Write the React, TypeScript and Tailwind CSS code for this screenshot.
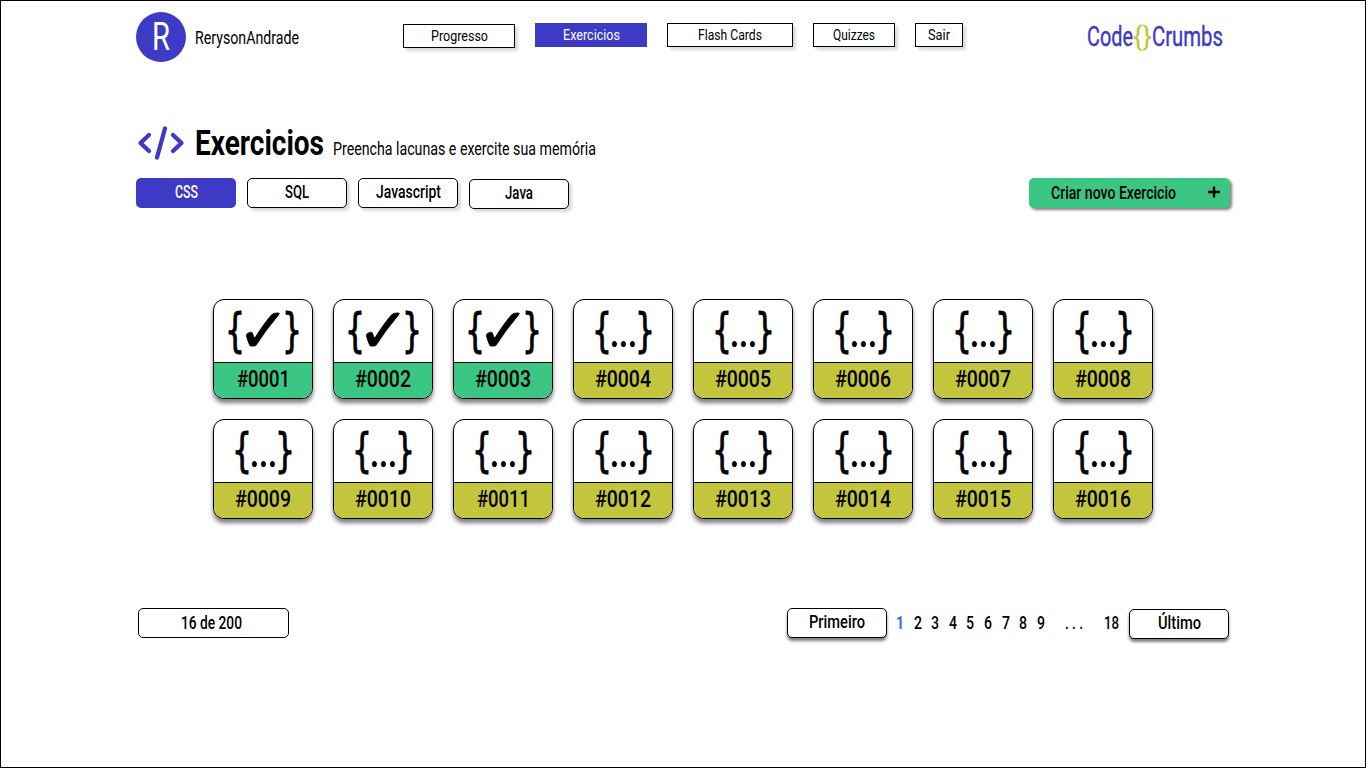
import { useLayoutEffect, useRef, useState } from 'react';
import type { ReactNode } from 'react';

/** Condenses its text horizontally so that it fills the width given by its classes. */
function Fit({ className, children }: { className: string; children: ReactNode }) {
  const outer = useRef<HTMLSpanElement>(null);
  const inner = useRef<HTMLSpanElement>(null);
  const [scale, setScale] = useState(1);
  useLayoutEffect(() => {
    if (outer.current && inner.current) {
      setScale(outer.current.clientWidth / inner.current.getBoundingClientRect().width);
    }
  }, []);
  return (
    <span ref={outer} className={`flex shrink-0 justify-start ${className}`}>
      <span
        ref={inner}
        className="block shrink-0 origin-left whitespace-nowrap"
        style={{ transform: `scaleX(${scale})` }}
      >
        {children}
      </span>
    </span>
  );
}

const navItems = [
  { label: 'Progresso', box: 'w-28 mt-px', text: 'w-[57px]', active: false },
  { label: 'Exercicios', box: 'w-28', text: 'w-[57px]', active: true },
  { label: 'Flash Cards', box: 'w-[126px]', text: 'w-16', active: false },
  { label: 'Quizzes', box: 'w-[82px]', text: 'w-[42px]', active: false },
  { label: 'Sair', box: 'w-12', text: 'w-[22px]', active: false },
];

const tabs = [
  { label: 'CSS', box: '', text: 'w-[23px]', active: true },
  { label: 'SQL', box: '', text: 'w-[24px]', active: false },
  { label: 'Javascript', box: '', text: 'w-[65px]', active: false },
  { label: 'Java', box: 'mt-px', text: 'w-[28px]', active: false },
];

function Card({ index }: { index: number }) {
  const done = index <= 3;
  return (
    <div className="flex size-[100px] flex-col overflow-hidden rounded-[11px] border border-black bg-white shadow-[0_4px_4px_rgba(0,0,0,0.5)]">
      <div className="flex h-[62px] items-center justify-center text-[47px] leading-none">
        <Fit className="w-[20px] pb-[3px] font-['DejaVu_Sans'] [-webkit-text-stroke:1px_#000]">{'{'}</Fit>
        {done ? (
          <Fit className="-mx-[8px] w-[53px] font-['DejaVu_Sans'] text-[62px] [-webkit-text-stroke:0.8px_#000]">✓</Fit>
        ) : (
          <Fit className="-mx-[2px] w-[27px] pt-[5px] text-[40px] font-bold">...</Fit>
        )}
        <Fit className="w-[20px] pb-[3px] font-['DejaVu_Sans'] [-webkit-text-stroke:1px_#000]">{'}'}</Fit>
      </div>
      <div
        className={`flex flex-1 items-center justify-center border-t border-black pb-0.5 text-[23.5px] leading-none font-medium ${
          done ? 'bg-[#3cc684]' : 'bg-[#c3c63c]'
        }`}
      >
        <Fit className={index === 1 || index === 11 ? 'w-[53px]' : 'w-[56px]'}>
          #{String(index).padStart(4, '0')}
        </Fit>
      </div>
    </div>
  );
}

export default function App() {
  return (
    <div className="flex h-[768px] w-[1366px] flex-col overflow-hidden border border-black bg-white font-['Roboto',sans-serif] text-black">
      <header className="flex h-[61px] items-start pt-[11px] pl-[135px]">
        <div className="flex size-[50px] items-center justify-center rounded-full bg-[#3d3ac6] text-[38px] leading-none text-white">
          <Fit className="w-[18px]">R</Fit>
        </div>
        <div className="flex h-[54px] w-[217px] items-center pl-[9px] text-[17.5px] leading-none">
          <Fit className="w-[104px]">RerysonAndrade</Fit>
        </div>
        <nav className="flex w-[560px] gap-5 pt-[11px]">
          {navItems.map((n) => (
            <a
              key={n.label}
              className={`flex h-6 items-center justify-center pt-px text-[15.5px] leading-none ${n.box} ${
                n.active
                  ? 'bg-[#3d3ac6] text-white'
                  : 'border border-black bg-white shadow-[3px_3px_3px_rgba(0,0,0,0.15)]'
              }`}
            >
              <Fit className={n.text}>{n.label}</Fit>
            </a>
          ))}
        </nav>
        <div className="flex pt-[11px] pl-[124px] text-[28px] leading-none text-[#3d3ac6]">
          <Fit className="w-[46px] [-webkit-text-stroke:0.4px_#3d3ac6]">Code</Fit>
          <Fit className="w-[19px] text-[#c3c63c]">{'{}'}</Fit>
          <Fit className="w-[71px] [-webkit-text-stroke:0.4px_#3d3ac6]">Crumbs</Fit>
        </div>
      </header>

      <section className="mt-[63px] flex h-[36px] items-start pl-[136px]">
        <svg className="h-[36px] w-[48px] shrink-0" viewBox="0 0 48 36" fill="none" stroke="#3d3ac6" strokeWidth="4.300" strokeLinecap="round" strokeLinejoin="round">
          <path d="M12 10 3.500 18l8.500 8M28 3.500 20 32.500M36 10 44.500 18l-8.500 8" />
        </svg>
        <h1 className="mt-px ml-[10px] text-[35px] leading-[36px] font-bold">
          <Fit className="w-[129px]">Exercicios</Fit>
        </h1>
        <p className="mt-[14px] ml-[9px] text-[17.5px] leading-[21px]">
          <Fit className="w-[263px]">Preencha lacunas e exercite sua memória</Fit>
        </p>
      </section>

      <section className="mt-[17px] flex h-8 justify-between pr-[135px] pl-[135px]">
        <div className="flex items-start gap-[11px]">
          {tabs.map((t) => (
            <button
              key={t.label}
              className={`flex h-[30px] w-[100px] items-center justify-center rounded-[5px] text-[17.5px] leading-none font-medium ${t.box} ${
                t.active
                  ? 'bg-[#3d3ac6] text-white'
                  : 'border border-black bg-white shadow-[3px_3px_3px_rgba(0,0,0,0.15)]'
              }`}
            >
              <Fit className={t.text}>{t.label}</Fit>
            </button>
          ))}
        </div>
        <button className="flex h-[30px] w-[201px] items-center justify-between rounded-[5px] bg-[#3cc684] pt-px pr-[10px] pl-[22px] text-[17.5px] leading-none font-medium shadow-[2px_2px_3px_rgba(0,0,0,0.5)]">
          <Fit className="w-[125px]">Criar novo Exercicio</Fit>
          <svg className="mb-[3px] size-3" viewBox="0 0 12 12" stroke="#000" strokeWidth="2.400">
            <path d="M0 6h12M6 0.500v11" />
          </svg>
        </button>
      </section>

      <main className="mt-[89px] ml-[212px] grid w-[940px] grid-cols-8 gap-5">
        {Array.from({ length: 16 }, (_, i) => (
          <Card key={i} index={i + 1} />
        ))}
      </main>

      <footer className="mt-[89px] flex h-8 items-start pl-[137px] text-[17.5px] leading-none font-medium">
        <div className="flex h-[30px] w-[151px] items-center rounded-[5px] border border-black pt-px pl-[42px]">
          <Fit className="w-[61px]">16 de 200</Fit>
        </div>
        <button className="ml-[498px] flex h-[30px] w-[100px] items-center justify-center rounded-[5px] border border-black bg-white shadow-[0_3px_3px_rgba(0,0,0,0.5)]">
          <Fit className="w-14">Primeiro</Fit>
        </button>
        <div className="ml-[9px] flex h-[31px] w-[150px] items-center gap-[9.600px]">
          {[1, 2, 3, 4, 5, 6, 7, 8, 9].map((n) => (
            <Fit key={n} className={n === 1 ? 'w-[8px] font-bold text-[#2f6bf2]' : 'w-[8px]'}>
              {n}
            </Fit>
          ))}
        </div>
        <div className="ml-[19px] flex h-[31px] w-[19px] items-center">
          <Fit className="w-[18px]">. . .</Fit>
        </div>
        <div className="ml-[20px] flex h-[31px] w-[25px] items-center">
          <Fit className="w-[15px]">18</Fit>
        </div>
        <button className="mt-px flex h-[30px] w-[100px] items-center justify-center rounded-[5px] border border-black bg-white shadow-[0_3px_3px_rgba(0,0,0,0.5)]">
          <Fit className="w-[43px]">Último</Fit>
        </button>
      </footer>
    </div>
  );
}
